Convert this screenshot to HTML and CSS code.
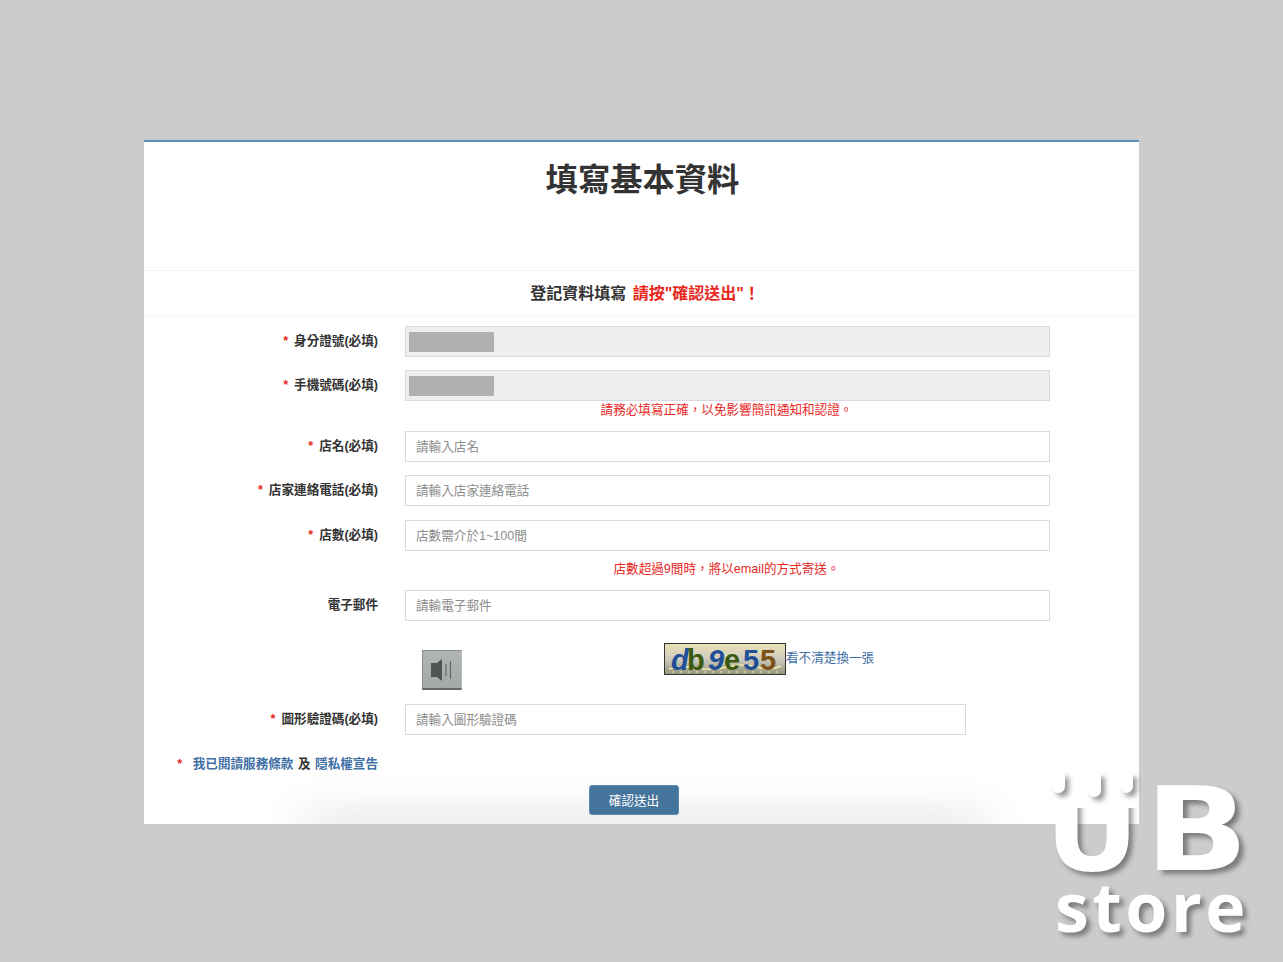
FILE: index.html
```html
<!DOCTYPE html>
<html lang="zh-Hant">
<head>
<meta charset="utf-8">
<title>填寫基本資料</title>
<link rel="stylesheet" href="styles.css">
</head>
<body>
<main class="modal">
  <header class="modal-head"><h1>填寫基本資料</h1></header>
  <div class="modal-sub">登記資料填寫 <span class="alert">請按"確認送出"！</span></div>
  <form class="form">
    <div class="row">
      <label class="label"><i>*</i>身分證號(必填)</label>
      <div class="field locked"><span class="redact"></span></div>
    </div>
    <div class="row">
      <label class="label"><i>*</i>手機號碼(必填)</label>
      <div class="field locked"><span class="redact"></span></div>
    </div>
    <p class="note note-tight">請務必填寫正確，以免影響簡訊通知和認證。</p>
    <div class="row">
      <label class="label"><i>*</i>店名(必填)</label>
      <input class="field" placeholder="請輸入店名">
    </div>
    <div class="row row-gap">
      <label class="label"><i>*</i>店家連絡電話(必填)</label>
      <input class="field" placeholder="請輸入店家連絡電話">
    </div>
    <div class="row row-flush">
      <label class="label"><i>*</i>店數(必填)</label>
      <input class="field" placeholder="店數需介於1~100間">
    </div>
    <p class="note note-loose">店數超過9間時，將以email的方式寄送。</p>
    <div class="row">
      <label class="label">電子郵件</label>
      <input class="field" placeholder="請輸電子郵件">
    </div>
    <div class="captcha-row">
      <button type="button" class="audio" aria-label="語音">
        <svg width="22" height="22" viewBox="0 0 22 22"><path fill="#4f5452" d="M0 4h6l5-4v22l-5-4H0z"/><path fill="none" stroke="#5f6462" stroke-width="1.1" d="M15 5v12M19.500 2v18"/></svg>
      </button>
      <svg class="captcha" width="122" height="32" viewBox="0 0 122 32">
        <defs><linearGradient id="cg" x1="0" y1="0" x2="0" y2="1"><stop offset="0" stop-color="#ece2b4"/><stop offset=".5" stop-color="#cdcbbf"/><stop offset="1" stop-color="#96957a"/></linearGradient></defs>
        <rect x=".5" y=".5" width="121" height="31" fill="url(#cg)" stroke="#333"/>
        <path d="M5 26q14-4 28-1t30-1 30 0 24-1" fill="none" stroke="#f4e9aa" stroke-width="1.5"/>
        <path d="M8 29h108" fill="none" stroke="#f4e9aa" stroke-width="1" stroke-dasharray="2 6"/>
        <text x="7" y="27" class="cap-i" fill="#1f4f96">d</text>
        <text x="23" y="27" class="cap-b" fill="#3a5a10">b</text>
        <text x="44" y="27" class="cap-i" fill="#1f4f96">9</text>
        <text x="60" y="27" class="cap-b" fill="#3a5a10">e</text>
        <text x="79" y="27" class="cap-b" fill="#1f4f96">5</text>
        <text x="96" y="27" class="cap-b" fill="#7d5216">5</text>
      </svg>
      <a class="refresh" href="#">看不清楚換一張</a>
    </div>
    <div class="row">
      <label class="label"><i>*</i>圖形驗證碼(必填)</label>
      <input class="field field-short" placeholder="請輸入圖形驗證碼">
    </div>
    <div class="terms"><i>*</i> <a href="#">我已閱讀服務條款</a> 及 <a href="#">隱私權宣告</a></div>
    <div class="actions"><button type="button" class="submit">確認送出</button></div>
  </form>
  <div class="fade"></div>
</main>
<div class="mark">
  <div class="mark-ub"><span>U</span><span class="mark-b">B</span></div>
  <span class="mark-cap"></span>
  <span class="drip d1"></span><span class="drip d2"></span><span class="drip d3"></span>
  <div class="mark-store">store</div>
</div>
</body>
</html>
```
FILE: styles.css
```css
* { box-sizing: border-box; }
html, body { margin: 0; height: 100%; }
body {
  background: #ccc;
  padding: 140px 144px 0;
  overflow: hidden;
  font-family: "Liberation Sans", "Noto Sans CJK TC", sans-serif;
  color: #333;
  font-size: 12.6px;
}
.modal {
  position: relative;
  background: #fff;
  border-top: 2px solid #5b8fbd;
  overflow: hidden;
}
.modal-head { padding: 18px 0 70px; border-bottom: 1px solid #f4f4f4; }
h1 { margin: 0 0 0 2px; font-size: 32.300px; line-height: 40px; font-weight: 700; text-align: center; color: #333; }
.modal-sub {
  padding: 11px 0 10px 7px;
  font-size: 16px;
  line-height: 24px;
  font-weight: 700;
  text-align: center;
  border-bottom: 1px solid #f4f4f4;
}
.alert { color: #e8281e; margin-left: 2px; }
.form { padding-top: 9px; }
.row { display: grid; grid-template-columns: 234px 645px; column-gap: 27px; align-items: center; margin-bottom: 13px; }
.row-gap { margin-bottom: 14px; }
.row-flush { margin-bottom: 0; }
.label { text-align: right; font-weight: 700; line-height: 18px; margin-top: -1px; }
i { font-style: normal; color: #e8281e; margin-right: 6px; font-weight: 700; }
.field {
  display: block;
  width: 100%;
  height: 31px;
  border: 1px solid #d9d9e0;
  background: #fff;
  padding: 0 10px;
  font: inherit;
  color: #333;
  outline: 0;
  border-radius: 0;
}
.field::placeholder { color: #8c8c8c; opacity: 1; }
.field-short { width: 561px; }
.locked { background: #eee; padding: 5px 3px 4px; }
.redact { display: block; width: 85px; height: 20px; background: #b0b0b0; }
.note { margin: 0 0 12px; padding-left: 259px; width: 906px; text-align: center; line-height: 18px; color: #e8281e; }
.note-tight { margin-top: -13px; }
.note-loose { margin-top: 9px; }
.captcha-row { display: flex; align-items: flex-start; height: 47px; margin: 22px 0 14px; padding-left: 278px; }
.audio {
  width: 40px; height: 40px; margin-top: 7px; padding: 0;
  background: linear-gradient(#b0b4b2, #a4a9a7);
  border: 1px solid #b9bdbb; border-bottom: 2px solid #666; border-left-color: #8a8e8c; border-top-color: #8a8e8c;
  display: flex; align-items: center; justify-content: center;
}
.captcha { display: block; margin-left: 202px; }
.cap-i { font: italic 700 29px "Liberation Sans", sans-serif; }
.cap-b { font: 700 29px "Liberation Sans", sans-serif; }
.refresh { color: #3f6fa5; text-decoration: none; line-height: 30px; }
.terms { width: 234px; text-align: right; font-weight: 700; line-height: 18px; margin: 20px 0 12px; white-space: nowrap; word-spacing: 1px; }
.terms a { color: #3f6fa5; text-decoration: none; }
.actions { padding: 0 15px 9px 0; display: flex; justify-content: center; }
.submit {
  position: relative; z-index: 1;
  width: 90px; height: 30px; padding: 0 0 2px;
  background: #44739c; color: #fff;
  border: 1px solid #5b8ab2; border-radius: 3px;
  font: inherit;
}
.fade {
  position: absolute; left: 160px; right: 154px; bottom: -20px; height: 20px;
  box-shadow: 0 0 50px rgba(0,0,0,.22);
}
.mark { position: absolute; left: 1045px; top: 760px; width: 215px; color: #fff; font-family: "Open Sans", sans-serif; font-weight: 700; }
.mark-ub { display: flex; font: 700 116px/90px "DejaVu Sans", sans-serif; height: 90px; margin-top: 25px; text-shadow: 4px 4px 5px rgba(0,0,0,.4); }
.mark-b { display: block; margin-left: 6px; transform: scaleX(1.17); transform-origin: left center; }
.mark-store { font-size: 68px; line-height: 50px; letter-spacing: 3.500px; margin-top: 6px; padding-left: 10px; text-shadow: 4px 4px 5px rgba(0,0,0,.4); }
.mark-cap { position: absolute; left: 8px; top: 15px; width: 86px; height: 33px; background: #fff; }
.drip { position: absolute; top: 13px; width: 13px; height: 20px; background: #fff; border-radius: 0 0 7px 7px; box-shadow: 4px 4px 5px rgba(0,0,0,.4); }
.d1 { left: 7px; } .d2 { left: 43px; height: 24px; } .d3 { left: 75px; }
```
